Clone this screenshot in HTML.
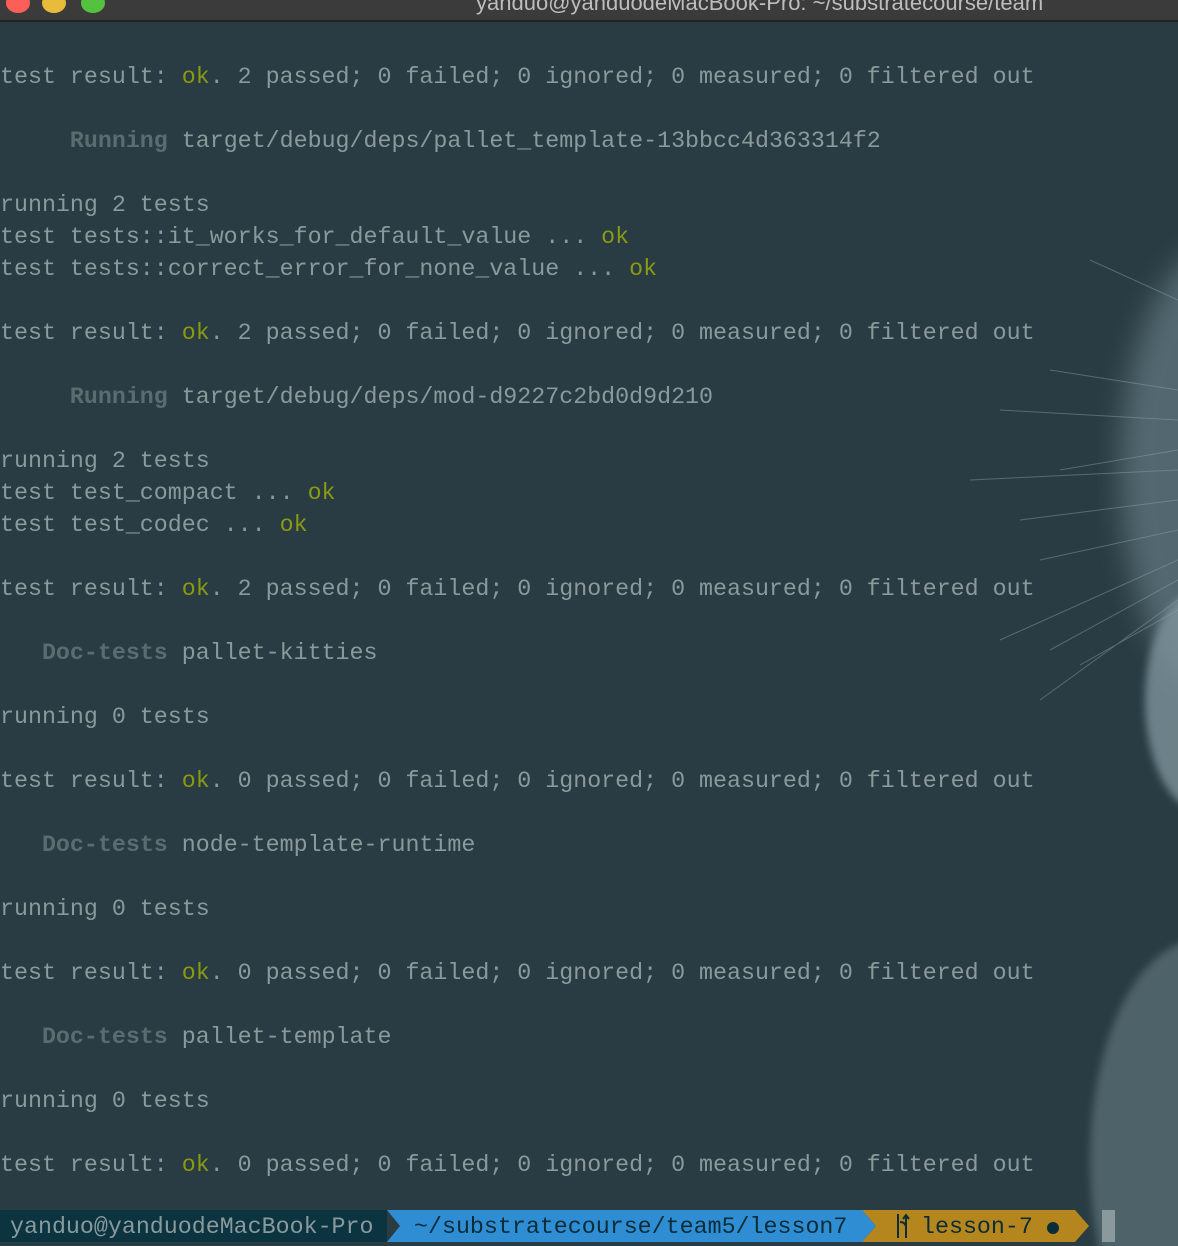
<!DOCTYPE html>
<html><head><meta charset="utf-8"><style>
html,body{margin:0;padding:0;width:1178px;height:1246px;overflow:hidden;background:#293c43;position:relative;}
#title{position:absolute;left:0;top:0;width:1178px;height:20px;background:#3b3b3b;border-bottom:2px solid #222;overflow:hidden;}
.dot{position:absolute;top:-7px;width:24px;height:20px;border-radius:50%;}
#title .t{position:absolute;left:476px;top:-10px;font:22px "Liberation Sans",sans-serif;color:#bdbdbd;white-space:nowrap;}
pre{position:absolute;left:0;top:61px;margin:0;font-family:"Liberation Mono",monospace;font-size:23.3px;line-height:32px;color:#8a9a9c;}
.ok{color:#8a9a12}
.b{color:#596d70;font-weight:bold}
#bar{position:absolute;left:0;top:1210px;height:32px;width:1178px;font-family:"Liberation Mono",monospace;font-size:23.3px;line-height:34px;}
.seg{position:absolute;top:0;height:32px;white-space:nowrap;}
</style></head><body>
<svg style="position:absolute;left:0;top:0" width="1178" height="1246">
<defs>
<filter id="bl"><feGaussianBlur stdDeviation="14"/></filter>
<filter id="bl2"><feGaussianBlur stdDeviation="4"/></filter>
</defs>
<g filter="url(#bl)" opacity="0.6">
<ellipse cx="1230" cy="470" rx="110" ry="230" fill="#6f858e"/>
</g>
<ellipse cx="1200" cy="700" rx="55" ry="110" fill="#7e939b" opacity="0.8" filter="url(#bl2)"/>
<ellipse cx="1200" cy="1160" rx="110" ry="220" fill="#55696f" opacity="0.85" filter="url(#bl2)"/>
<g stroke="#8ea3ab" stroke-width="1" opacity="0.45" fill="none">
<path d="M1178 390 L1050 370 M1178 420 L1000 410 M1178 450 L1060 470 M1178 500 L1020 520 M1178 530 L1040 560 M1178 560 L1000 640 M1178 580 L1050 650 M1178 600 L1040 700 M1178 300 L1090 260 M1178 470 L970 480 M1178 610 L1080 665"/>
</g>
</svg>
<div id="title">
<div class="dot" style="left:6px;background:#fc5f57"></div>
<div class="dot" style="left:42px;background:#e8bb3a"></div>
<div class="dot" style="left:81px;background:#55c23f"></div>
<div class="t">yanduo@yanduodeMacBook-Pro: ~/substratecourse/team</div>
</div>
<pre>test result: <span class="ok">ok</span>. 2 passed; 0 failed; 0 ignored; 0 measured; 0 filtered out

     <span class="b">Running</span> target/debug/deps/pallet_template-13bbcc4d363314f2

running 2 tests
test tests::it_works_for_default_value ... <span class="ok">ok</span>
test tests::correct_error_for_none_value ... <span class="ok">ok</span>

test result: <span class="ok">ok</span>. 2 passed; 0 failed; 0 ignored; 0 measured; 0 filtered out

     <span class="b">Running</span> target/debug/deps/mod-d9227c2bd0d9d210

running 2 tests
test test_compact ... <span class="ok">ok</span>
test test_codec ... <span class="ok">ok</span>

test result: <span class="ok">ok</span>. 2 passed; 0 failed; 0 ignored; 0 measured; 0 filtered out

   <span class="b">Doc-tests</span> pallet-kitties

running 0 tests

test result: <span class="ok">ok</span>. 0 passed; 0 failed; 0 ignored; 0 measured; 0 filtered out

   <span class="b">Doc-tests</span> node-template-runtime

running 0 tests

test result: <span class="ok">ok</span>. 0 passed; 0 failed; 0 ignored; 0 measured; 0 filtered out

   <span class="b">Doc-tests</span> pallet-template

running 0 tests

test result: <span class="ok">ok</span>. 0 passed; 0 failed; 0 ignored; 0 measured; 0 filtered out</pre>
<div id="bar">
<svg style="position:absolute;left:0;top:0" width="1178" height="32">
<polygon points="0,0 387,0 387,32 0,32" fill="#0b3340"/>
<polygon points="387,0 862,0 876,16 862,32 387,32 400,16" fill="#2f8dd3"/>
<polygon points="862,0 1075,0 1089,16 1075,32 862,32 876,16" fill="#b5861d"/>
<rect x="1102" y="0" width="13" height="32" fill="#8a9a9c"/>
<path d="M898 4 V28 M906 28 V18 Q906 12 900 12 M906 18 V6 M903 9 L906 5 L909 9" stroke="#0b2d38" stroke-width="2" fill="none"/>
<circle cx="1053" cy="18" r="6" fill="#0b2d38"/>
</svg>
<div class="seg" style="left:10px;color:#8a9a9c">yanduo@yanduodeMacBook-Pro</div>
<div class="seg" style="left:414px;color:#0b2d38">~/substratecourse/team5/lesson7</div>
<div class="seg" style="left:921px;color:#0b2d38">lesson-7</div>
</div>
</body></html>
